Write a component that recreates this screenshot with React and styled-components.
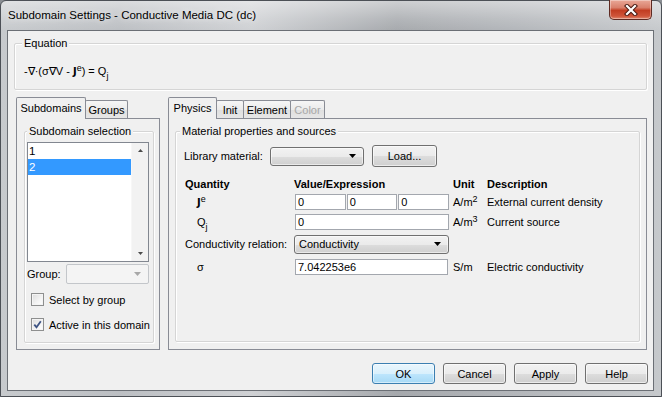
import React from 'react';
import styled, { createGlobalStyle, css } from 'styled-components';

const GlobalStyle = createGlobalStyle`
  html, body { margin: 0; padding: 0; }
  body {
    width: 662px; height: 397px; overflow: hidden; background: #8a8e93;
    font-family: "Liberation Sans", Arial, sans-serif; font-size: 11px; color: #000;
  }
  *, *::before, *::after { box-sizing: border-box; }
`;

const Window = styled.div`
  width: 662px;
  height: 397px;
  display: flex;
  flex-direction: column;
  padding: 0 7px 5px 6px;
  border: 1px solid #4c5056;
  border-radius: 6px 6px 0 0;
  background:
    linear-gradient(180deg, rgba(255,255,255,0.45) 0px, rgba(255,255,255,0.15) 18px, rgba(255,255,255,0) 30px),
    linear-gradient(90deg, #c7cacd 0%, #bcbfc3 18%, #cfd1d4 38%, #a6a9ad 60%, #b3b6ba 78%, #c6c9cc 100%);
`;

const TitleBar = styled.div`
  height: 29px;
  display: flex;
  align-items: flex-start;
`;

const TitleText = styled.div`
  padding-top: 7px;
  padding-left: 1px;
  font-size: 11.5px;
  line-height: 14px;
  color: #000;
  text-shadow: 0 0 6px rgba(255,255,255,0.9);
`;

const CloseButton = styled.div`
  width: 43px;
  height: 20px;
  margin: -1px 2px 0 auto;
  border: 1px solid #5e2a22;
  border-top: none;
  border-radius: 0 0 5px 5px;
  background: linear-gradient(180deg, #e9a898 0%, #d9806c 40%, #c23d22 55%, #cf553a 85%, #e08a70 100%);
  box-shadow: inset 0 0 0 1px rgba(255,255,255,0.35);
  display: flex;
  align-items: center;
  justify-content: center;
`;

const Client = styled.div`
  flex: 1;
  display: flex;
  flex-direction: column;
  background: #f0f0f0;
  border: 1px solid #6b6f75;
  padding: 12px 6px 0 6px;
`;

const GroupBox = styled.div`
  position: relative;
  border: 1px solid #d5d5d5;
  border-radius: 2px;
  box-shadow: inset 1px 1px 0 #ffffff, 1px 1px 0 #ffffff;
`;

const GroupLabel = styled.span`
  position: absolute;
  top: -7px;
  left: ${p => p.$left}px;
  padding: 0 2px;
  line-height: 13px;
  background: #f0f0f0;
  white-space: nowrap;
`;

const EquationBox = styled(GroupBox)`
  height: 47px;
  padding: 21px 0 0 9px;
  line-height: 13px;
`;

const Bold = styled.b`
  font-weight: bold;
  font-family: "DejaVu Sans", "Liberation Sans", sans-serif;
  font-size: 10px;
`;

const Sup = styled.sup`
  font-size: 9px;
  line-height: 0;
  vertical-align: 4px;
`;

const Sub = styled.sub`
  font-size: 9px;
  line-height: 0;
  vertical-align: -4px;
`;

const TabsRow = styled.div`
  height: 253px;
  margin: 7px 0 0 2px;
  display: flex;
  gap: 8px;
`;

const TabPane = styled.div`
  display: flex;
  flex-direction: column;
  width: ${p => (p.$w ? `${p.$w}px` : 'auto')};
  flex: ${p => (p.$w ? '0 0 auto' : '1')};
`;

const TabStrip = styled.div`
  height: 21px;
  display: flex;
  align-items: flex-end;
  position: relative;
  z-index: 1;
`;

const Tab = styled.div`
  width: ${p => p.$w}px;
  height: 18px;
  display: flex;
  align-items: center;
  justify-content: center;
  border: 1px solid #898c95;
  border-bottom: none;
  margin-left: -1px;
  border-radius: 2px 2px 0 0;
  background: linear-gradient(180deg, #f6f6f6 0%, #ebebeb 50%, #dfdfdf 51%, #e6e6e6 100%);
  color: ${p => (p.$disabled ? '#a7a7a7' : '#000')};
  padding-top: 1px;
  white-space: nowrap;
  &:first-child { margin-left: 0; }
  ${p => p.$active && css`
    height: 22px;
    margin-bottom: -1px;
    background: #f0f0f0;
    padding-top: 0;
    padding-bottom: 2px;
  `}
`;

const Panel = styled.div`
  flex: 1;
  display: flex;
  flex-direction: column;
  border: 1px solid #898c95;
  background: #f0f0f0;
`;

const LeftGroup = styled(GroupBox)`
  flex: 1;
  margin: 12px 5px 6px 7px;
  padding: 10px 0 0 2px;
  display: flex;
  flex-direction: column;
`;

const ListBox = styled.div`
  width: 122px;
  height: 120px;
  border: 1px solid #828790;
  background: #fff;
  display: flex;
`;

const ListItems = styled.div`
  flex: 1;
`;

const ListItem = styled.div`
  height: 16px;
  line-height: 16px;
  padding-left: 1px;
  font-size: 11.5px;
  background: ${p => (p.$selected ? '#3399ff' : 'transparent')};
  color: ${p => (p.$selected ? '#fff' : '#000')};
`;

const ScrollBar = styled.div`
  width: 17px;
  background: #f2f2f2;
  border-left: 1px solid #f7f7f7;
  display: flex;
  flex-direction: column;
  justify-content: space-between;
  align-items: center;
  padding: 6px 0 6px;
`;

const FieldRow = styled.div`
  display: flex;
  align-items: center;
  margin-top: ${p => p.$mt || 0}px;
`;

const FieldLabel = styled.span`
  width: ${p => p.$w}px;
  white-space: nowrap;
`;

const ComboBox = styled.div`
  width: ${p => p.$w}px;
  height: ${p => p.$h || 20}px;
  display: flex;
  align-items: center;
  justify-content: space-between;
  padding: 0 7px 0 4px;
  border: 1px solid #707070;
  border-radius: 3px;
  background: linear-gradient(180deg, #f2f2f2 0%, #ebebeb 50%, #dddddd 51%, #cfcfcf 100%);
  box-shadow: inset 0 0 0 1px rgba(255,255,255,0.55);
  ${p => p.$disabled && css`
    border-color: #c3c6ca;
    background: #f4f4f4;
    box-shadow: none;
    border-radius: 2px;
  `}
`;

const CheckRow = styled.label`
  display: flex;
  align-items: center;
  gap: 5px;
  margin: ${p => p.$mt}px 0 0 4px;
  height: 13px;
`;

const CheckBox = styled.span`
  width: 13px;
  height: 13px;
  border: 1px solid #8e8f8f;
  background: linear-gradient(135deg, #dcdcdc 0%, #f4f4f4 60%, #ffffff 100%);
  box-shadow: inset 0 0 0 1px #f4f4f4;
  display: flex;
  align-items: center;
  justify-content: center;
`;

const RightGroup = styled(GroupBox)`
  flex: 1;
  margin: 12px 6px 7px 6px;
  padding: 13px 0 0 8px;
`;

const Button = styled.div`
  width: ${p => p.$w || 63}px;
  height: ${p => p.$h || 21}px;
  margin-left: ${p => p.$ml || 0}px;
  display: flex;
  align-items: center;
  justify-content: center;
  border: 1px solid #707070;
  border-radius: 3px;
  background: linear-gradient(180deg, #f2f2f2 0%, #ebebeb 50%, #dddddd 51%, #cfcfcf 100%);
  box-shadow: inset 0 0 0 1px rgba(255,255,255,0.6);
  ${p => p.$default && css`
    border-color: #3c7fb1;
    background: linear-gradient(180deg, #eaf6fd 0%, #d9f0fc 50%, #bee6fd 51%, #a7d9f5 100%);
    box-shadow: inset 0 0 0 1px rgba(255,255,255,0.5);
  `}
`;

const Table = styled.div`
  display: grid;
  grid-template-columns: 109px 159px 34px 1fr;
  grid-template-rows: 16px 19px 21px 24px 22px;
  align-items: center;
  margin: 9px 0 0 1px;
`;

const Head = styled.div`
  font-weight: bold;
  font-size: 11px;
`;

const SymbolCell = styled.div`
  padding-left: ${p => p.$pl ?? 12}px;
  white-space: nowrap;
`;

const InputGroup = styled.div`
  display: flex;
  gap: 1px;
  width: ${p => p.$w || 154}px;
  margin-left: 1px;
`;

const TextInput = styled.div`
  flex: 1;
  height: 16px;
  line-height: 14px;
  padding-left: 2px;
  border: 1px solid #a3a7ae;
  background: #fff;
`;

const UnitCell = styled.div`
  white-space: nowrap;
`;

const ButtonRow = styled.div`
  display: flex;
  justify-content: flex-end;
  gap: 8px;
  margin: 13px -1px 0 0;
`;

const ComboArrow = ({ color = '#000' }) => (
  <svg width="7" height="4" viewBox="0 0 7 4"><polygon points="0,0 7,0 3.5,4" fill={color} /></svg>
);

const SmallArrow = ({ up }) => (
  <svg width="5" height="3" viewBox="0 0 5 3">
    <polygon points={up ? '0,3 5,3 2.5,0' : '0,0 5,0 2.5,3'} fill="#4a4a4a" />
  </svg>
);

const CheckMark = () => (
  <svg width="9" height="9" viewBox="0 0 9 9">
    <path d="M1.3 4.6 L3.5 7.2 L7.8 1.2" stroke="#3e5484" strokeWidth="1.8" fill="none" />
  </svg>
);

const CloseX = () => (
  <svg width="14" height="12" viewBox="0 0 14 12">
    <path d="M3 2 L11 10 M11 2 L3 10" stroke="#4a1a12" strokeWidth="4.2" strokeLinecap="square" />
    <path d="M3 2 L11 10 M11 2 L3 10" stroke="#ffffff" strokeWidth="2.2" strokeLinecap="square" />
  </svg>
);

export default function App() {
  return (
    <>
      <GlobalStyle />
      <Window>
        <TitleBar>
          <TitleText>Subdomain Settings - Conductive Media DC (dc)</TitleText>
          <CloseButton><CloseX /></CloseButton>
        </TitleBar>
        <Client>
          <EquationBox>
            <GroupLabel $left={7}>Equation</GroupLabel>
            -∇·(σ∇V - <Bold>J</Bold><Sup>e</Sup>) = Q<Sub>j</Sub>
          </EquationBox>

          <TabsRow>
            <TabPane $w={144}>
              <TabStrip>
                <Tab $w={70} $active>Subdomains</Tab>
                <Tab $w={43}>Groups</Tab>
              </TabStrip>
              <Panel>
                <LeftGroup>
                  <GroupLabel $left={2}>Subdomain selection</GroupLabel>
                  <ListBox>
                    <ListItems>
                      <ListItem>1</ListItem>
                      <ListItem $selected>2</ListItem>
                    </ListItems>
                    <ScrollBar>
                      <SmallArrow up />
                      <SmallArrow />
                    </ScrollBar>
                  </ListBox>
                  <FieldRow $mt={2}>
                    <FieldLabel $w={39}>Group:</FieldLabel>
                    <ComboBox $w={83} $disabled>
                      <span />
                      <ComboArrow color="#a8a8a8" />
                    </ComboBox>
                  </FieldRow>
                  <CheckRow $mt={9}>
                    <CheckBox />
                    <span>Select by group</span>
                  </CheckRow>
                  <CheckRow $mt={12}>
                    <CheckBox><CheckMark /></CheckBox>
                    <span>Active in this domain</span>
                  </CheckRow>
                </LeftGroup>
              </Panel>
            </TabPane>

            <TabPane>
              <TabStrip>
                <Tab $w={49} $active>Physics</Tab>
                <Tab $w={28}>Init</Tab>
                <Tab $w={48}>Element</Tab>
                <Tab $w={35} $disabled>Color</Tab>
              </TabStrip>
              <Panel>
                <RightGroup>
                  <GroupLabel $left={4}>Material properties and sources</GroupLabel>
                  <FieldRow>
                    <FieldLabel $w={86}>Library material:</FieldLabel>
                    <ComboBox $w={94} $h={19}>
                      <span />
                      <ComboArrow />
                    </ComboBox>
                    <Button $w={65} $h={22} $ml={8}>Load...</Button>
                  </FieldRow>
                  <Table>
                    <Head>Quantity</Head>
                    <Head>Value/Expression</Head>
                    <Head>Unit</Head>
                    <Head>Description</Head>

                    <SymbolCell><Bold>J</Bold><Sup>e</Sup></SymbolCell>
                    <InputGroup>
                      <TextInput>0</TextInput>
                      <TextInput>0</TextInput>
                      <TextInput>0</TextInput>
                    </InputGroup>
                    <UnitCell>A/m<Sup>2</Sup></UnitCell>
                    <div>External current density</div>

                    <SymbolCell>Q<Sub>j</Sub></SymbolCell>
                    <InputGroup><TextInput>0</TextInput></InputGroup>
                    <UnitCell>A/m<Sup>3</Sup></UnitCell>
                    <div>Current source</div>

                    <SymbolCell $pl={0}>Conductivity relation:</SymbolCell>
                    <ComboBox $w={155} $h={19}>
                      <span>Conductivity</span>
                      <ComboArrow />
                    </ComboBox>
                    <div />
                    <div />

                    <SymbolCell>σ</SymbolCell>
                    <InputGroup $w={153}><TextInput>7.042253e6</TextInput></InputGroup>
                    <UnitCell>S/m</UnitCell>
                    <div>Electric conductivity</div>
                  </Table>
                </RightGroup>
              </Panel>
            </TabPane>
          </TabsRow>

          <ButtonRow>
            <Button $default>OK</Button>
            <Button>Cancel</Button>
            <Button>Apply</Button>
            <Button>Help</Button>
          </ButtonRow>
        </Client>
      </Window>
    </>
  );
}
